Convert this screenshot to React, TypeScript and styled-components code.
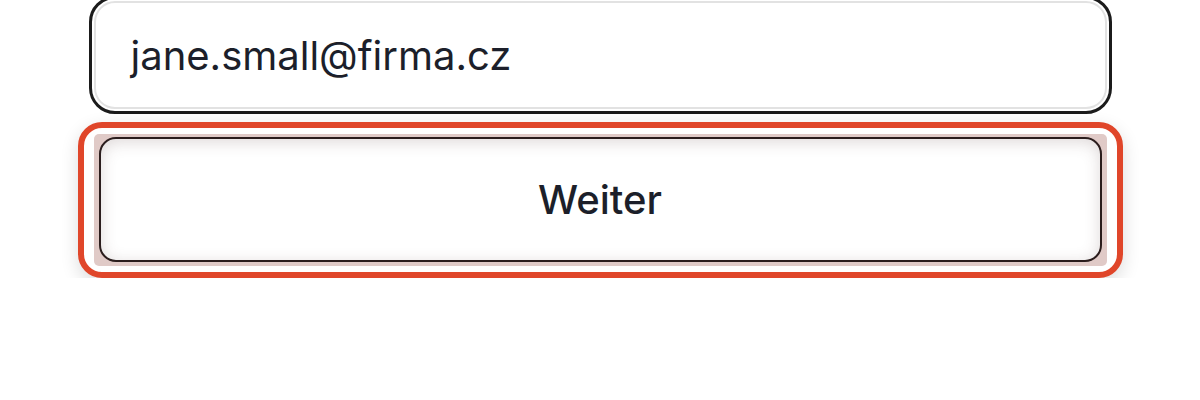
import React from "react";
import styled, { createGlobalStyle } from "styled-components";

const Global = createGlobalStyle`
  html, body { margin: 0; padding: 0; background: #ffffff; }
  body { font-family: Inter, "Noto Sans", sans-serif; overflow: hidden; }
`;

const Form = styled.div`
  width: 1023px;
  margin: -4px auto 0;
  display: flex;
  flex-direction: column;
  gap: 8px;
`;

const Field = styled.div`
  height: 118px;
  box-sizing: border-box;
  border: 3px solid #1b1b1b;
  border-radius: 26px;
  background: #ffffff;
  box-shadow: inset 0 0 0 2px #ffffff, inset 0 0 0 4px #e2e2e2;
  display: flex;
  align-items: center;
  padding: 0 39px;
  font-size: 40px;
  color: #1c1f2a;
  letter-spacing: 0;
`;

const FocusRing = styled.div`
  margin: 0 -11px;
  border: 6px solid #e0462a;
  border-radius: 24px;
  padding: 6px 10px;
  background: #ffffff;
  box-shadow: 0 6px 18px rgba(0, 0, 0, 0.14);
`;

const Halo = styled.div`
  background: #e0cac7;
  border-radius: 5px;
  padding: 3px 5px 4px;
`;

const Button = styled.button`
  display: flex;
  width: 100%;
  height: 125px;
  align-items: center;
  justify-content: center;
  box-sizing: border-box;
  border: 2px solid #2b1d1d;
  border-radius: 17px;
  background: #ffffff;
  box-shadow: inset 0 3px 16px rgba(90, 60, 60, 0.2);
  font-family: Inter, "Noto Sans", sans-serif;
  font-size: 40px;
  font-weight: 500;
  color: #1c1f2a;
  cursor: pointer;
  padding: 0;
`;

export default function App() {
  return (
    <>
      <Global />
      <Form>
        <Field>jane.small@firma.cz</Field>
        <FocusRing>
          <Halo>
            <Button>Weiter</Button>
          </Halo>
        </FocusRing>
      </Form>
    </>
  );
}
